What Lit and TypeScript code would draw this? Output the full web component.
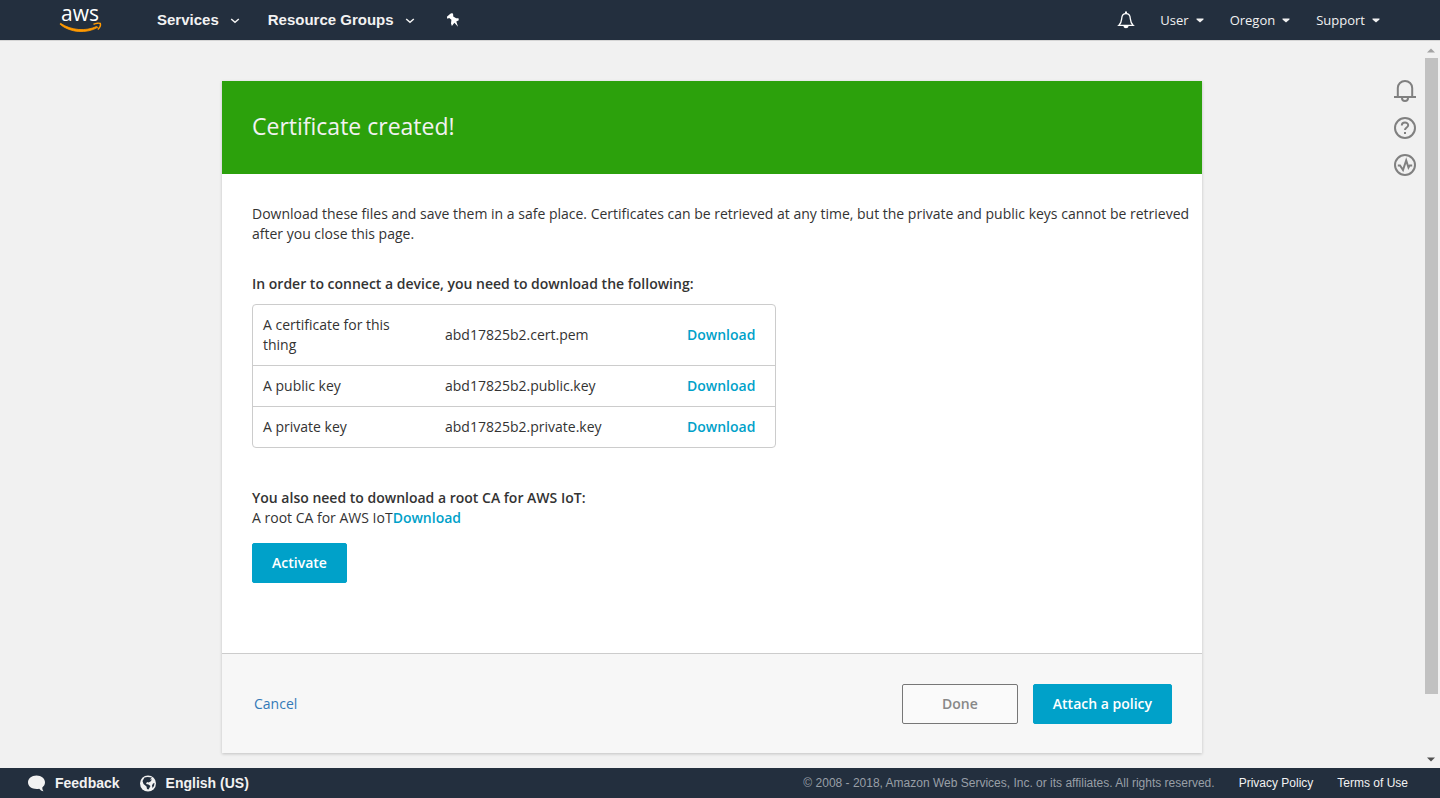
import { LitElement, html, css, svg } from "lit";
import { customElement, property } from "lit/decorators.js";

interface CertFile {
  label: string;
  name: string;
}

const FILES: CertFile[] = [
  { label: "A certificate for this thing", name: "abd17825b2.cert.pem" },
  { label: "A public key", name: "abd17825b2.public.key" },
  { label: "A private key", name: "abd17825b2.private.key" },
];

const chevron = svg`<path d="M1.200 3 5 6.300l3.800-3.300" fill="none" stroke="currentColor" stroke-width="1.500"/>`;
const caret = svg`<path d="M1.500 2.500h7v1L5 6.500 1.500 3.500z" fill="currentColor"/>`;

@customElement("console-header")
export class ConsoleHeader extends LitElement {
  static styles = css`
    :host {
      display: block;
      font-family: "Liberation Sans", Arial, sans-serif;
    }
    .bar {
      display: flex;
      align-items: center;
      justify-content: space-between;
      height: 40px;
      padding: 0 59px;
      background: #232f3e;
      border-bottom: 1px solid #d5d5d5;
    }
    .group {
      display: flex;
      align-items: center;
    }
    .logo {
      display: block;
      margin-right: 54px;
    }
    .logo svg,
    button svg {
      display: block;
      overflow: visible;
    }
    .logo text {
      font-family: "Open Sans", sans-serif;
      font-size: 21px;
      font-weight: 500;
    }
    button {
      display: flex;
      align-items: center;
      padding: 0;
      border: 0;
      background: none;
      color: #f2f2f2;
      font: bold 15px/20px "Liberation Sans", Arial, sans-serif;
      cursor: pointer;
    }
    .main {
      gap: 11px;
      margin-right: 28px;
    }
    .side {
      gap: 6px;
      margin-left: 25px;
      font: 500 13px/20px "Open Sans", sans-serif;
    }
  `;

  render() {
    return html`
      <header class="bar">
        <nav class="group" aria-label="Services">
          <a class="logo" href="#" aria-label="aws">
            <svg width="44" height="38" viewBox="0 0 44 38">
              <text x="2" y="20" fill="#fff">aws</text>
              <path d="M1.500 22.300C12 29.500 27 30.500 37.500 25.500L38.800 26.300C28 32.800 11 32 1 23.200z" fill="#f90" stroke="#f90" stroke-width="0.800" />
              <path d="M34.500 23.300C37 21.800 40.500 22 41.300 22.500 41.800 24 41 26.500 38.800 28.500" fill="none" stroke="#f90" stroke-width="1.500" />
            </svg>
          </a>
          <button class="main">Services <svg width="10" height="8" viewBox="0 0 10 8">${chevron}</svg></button>
          <button class="main">Resource Groups <svg width="10" height="8" viewBox="0 0 10 8">${chevron}</svg></button>
          <button aria-label="Pin shortcuts">
            <svg width="18" height="16" viewBox="-2 0 18 16">
              <path d="M5.300 1.800 7.300 1 8.200 2.500 8.200 4.500 11.200 6.300 13.500 6.300 13.800 8.200 11.300 9.400 13 14.800 9.400 10.800 6.900 14 6 11.500 6.400 7.800 4.200 6 2.300 6.800 1.900 4.800z" fill="#fff" />
            </svg>
          </button>
        </nav>
        <div class="group">
          <button aria-label="Notifications">
            <svg width="18" height="18" viewBox="0 0 18 18">
              <path d="M1.800 14.400C4.500 12 4.500 10 4.700 7.500 4.900 4.500 6.500 2.700 9 2.700S13.100 4.500 13.300 7.500C13.500 10 13.500 12 16.200 14.400z" fill="none" stroke="#fff" stroke-width="1.300" />
              <path d="M8 0.500h2v2H8zM6.500 15h5c0 3-5 3-5 0z" fill="#fff" />
            </svg>
          </button>
          ${["User", "Oregon", "Support"].map(
            (name) => html`<button class="side">${name} <svg width="10" height="8" viewBox="0 0 10 8">${caret}</svg></button>`
          )}
        </div>
      </header>
    `;
  }
}

@customElement("console-footer")
export class ConsoleFooter extends LitElement {
  static styles = css`
    :host {
      display: block;
      font: 12px/20px "Liberation Sans", Arial, sans-serif;
    }
    .bar {
      display: flex;
      align-items: center;
      justify-content: space-between;
      height: 30px;
      padding: 0 32px 0 28px;
      background: #232f3e;
      color: #999fa7;
    }
    .group {
      display: flex;
      align-items: center;
      gap: 20px;
    }
    .legal {
      gap: 24px;
    }
    button {
      display: flex;
      align-items: center;
      gap: 9px;
      padding: 0;
      border: 0;
      background: none;
      color: #f2f2f2;
      font: bold 14px/20px "Liberation Sans", Arial, sans-serif;
      cursor: pointer;
    }
    a {
      color: #f2f2f2;
      text-decoration: none;
    }
  `;

  render() {
    return html`
      <footer class="bar">
        <div class="group">
          <button>
            <svg width="18" height="17" viewBox="0 0 18 17">
              <path d="M8.500 0.500c5 0 8.500 3 8.500 6.800 0 2.200-1 3.900-2.700 5.100 0 1.800 0.500 2.800 1.200 3.900-1.800-0.200-3.300-1.300-4.300-2.500C5 14.800 0 12 0 7.300 0 3.500 3.500 0.500 8.500 0.500z" fill="#f2f2f2" />
            </svg>
            Feedback
          </button>
          <button>
            <svg width="17" height="17" viewBox="0 0 17 17">
              <circle cx="8" cy="8.500" r="8" fill="#f2f2f2" />
              <path d="M4.500 2.500 7.500 2 12 2.500 10 4.500 12 4.500 10.500 6.500 8.500 7.500 7 7 6 9 8.500 9.500 10.500 11 8.500 14.500 7 14 6.500 11.500 3.500 9 2.500 6zM13 8.500 14.500 8 14 11 12.500 13 12 10.500z" fill="#232f3e" />
            </svg>
            English (US)
          </button>
        </div>
        <div class="group legal">
          <span>© 2008 - 2018, Amazon Web Services, Inc. or its affiliates. All rights reserved.</span>
          <a href="#">Privacy Policy</a>
          <a href="#">Terms of Use</a>
        </div>
      </footer>
    `;
  }
}

@customElement("certificate-card")
export class CertificateCard extends LitElement {
  @property({ attribute: false }) files: CertFile[] = FILES;

  static styles = css`
    :host {
      display: block;
      font: 14px/20px "Open Sans", sans-serif;
      color: #333;
    }
    .card {
      background: #fff;
      box-shadow: 0 1px 3px rgba(0, 0, 0, 0.2);
    }
    .title {
      margin: 0;
      padding: 30px 30px 33px;
      background: #2ca10c;
      color: #f2f2f2;
      font-size: 23px;
      line-height: 30px;
      font-weight: 500;
    }
    .body {
      padding: 30px 10px 70px 30px;
    }
    p,
    h2 {
      margin: 0;
      font-size: 14px;
      line-height: 20px;
    }
    h2 {
      font-weight: 600;
    }
    .intro {
      margin-bottom: 30px;
    }
    .files {
      width: 524px;
      margin: 10px 0 40px;
      border: 1px solid #ccc;
      border-radius: 4px;
      border-spacing: 0;
      table-layout: fixed;
    }
    th,
    td {
      padding: 10px;
      text-align: left;
      font-weight: 400;
    }
    th {
      width: 132px;
      padding-right: 40px;
    }
    .action {
      width: 78px;
    }
    tr + tr > * {
      border-top: 1px solid #ccc;
    }
    a {
      color: #00a1c9;
      font-weight: 600;
      text-decoration: none;
    }
    button {
      height: 40px;
      padding: 0 19px;
      border: 1px solid #00a1c9;
      border-radius: 2px;
      background: #00a1c9;
      color: #fff;
      font: 600 14px/20px "Open Sans", sans-serif;
      cursor: pointer;
    }
    .activate {
      display: block;
      margin-top: 15px;
    }
    .foot {
      display: flex;
      align-items: center;
      gap: 15px;
      padding: 30px 30px 29px;
      border-top: 1px solid #ccc;
      background: #f7f7f7;
    }
    .cancel {
      margin-right: auto;
      padding-left: 2px;
      color: #337ab7;
      font-weight: 400;
    }
    .done {
      padding: 0 39px;
      border-color: #777;
      background: #fafafa;
      color: #888;
    }
  `;

  render() {
    return html`
      <section class="card">
        <h1 class="title">Certificate created!</h1>
        <div class="body">
          <p class="intro">
            Download these files and save them in a safe place. Certificates can be retrieved at any time, but the
            private and public keys cannot be retrieved after you close this page.
          </p>
          <h2>In order to connect a device, you need to download the following:</h2>
          <table class="files">
            ${this.files.map(
              (f) => html`<tr>
                <th scope="row">${f.label}</th>
                <td>${f.name}</td>
                <td class="action"><a href="#">Download</a></td>
              </tr>`
            )}
          </table>
          <h2>You also need to download a root CA for AWS IoT:</h2>
          <p>A root CA for AWS IoT<a href="#">Download</a></p>
          <button class="activate">Activate</button>
        </div>
        <div class="foot">
          <a class="cancel" href="#">Cancel</a>
          <button class="done">Done</button>
          <button>Attach a policy</button>
        </div>
      </section>
    `;
  }
}

@customElement("app-root")
export class AppRoot extends LitElement {
  static styles = css`
    :host {
      display: grid;
      grid-template-rows: auto 1fr auto;
      height: 100vh;
    }
    .main {
      display: grid;
      grid-template-columns: 1fr minmax(0, 980px) 1fr 16px;
      min-height: 0;
      overflow: hidden;
      background: #f1f1f1;
    }
    .card {
      grid-column: 2;
      margin-top: 40px;
    }
    .tools {
      display: flex;
      flex-direction: column;
      align-items: flex-end;
      gap: 13px;
      padding: 38px 7px 0 0;
    }
    .tools button {
      padding: 0;
      border: 0;
      background: none;
      cursor: pointer;
    }
    .tools svg {
      display: block;
      fill: none;
      stroke: #808080;
      stroke-width: 2;
    }
    .scroll {
      display: flex;
      flex-direction: column;
      align-items: center;
      gap: 5px;
      padding: 7px 2px 6px 0;
    }
    .thumb {
      flex: 0 1 636px;
      width: 13px;
      background: #c1c1c1;
    }
    .scroll svg {
      flex: none;
    }
    .down {
      margin-top: auto;
    }
  `;

  render() {
    return html`
      <console-header></console-header>
      <main class="main">
        <certificate-card class="card"></certificate-card>
        <div class="tools">
          <button aria-label="Notifications">
            <svg width="24" height="24" viewBox="0 0 24 24">
              <path d="M1 18h22M4.800 18V9a7.200 7 0 0 1 14.400 0V18M9 19a3 3 0 0 0 6 0" />
            </svg>
          </button>
          <button aria-label="Help">
            <svg width="24" height="24" viewBox="0 0 24 24">
              <circle cx="12" cy="12" r="10" />
              <path d="M8.800 9.500c0-4 6.400-3.800 6.400-0.300 0 2.300-3.200 2.300-3.200 4.800M12 16v2" />
            </svg>
          </button>
          <button aria-label="Activity">
            <svg width="24" height="24" viewBox="0 0 24 24">
              <circle cx="12" cy="12" r="10" />
              <path d="M4.800 12.500h2.200l3 4.500L13.200 7.500l2.300 7 1.200-2h2.500" />
            </svg>
          </button>
        </div>
        <div class="scroll" aria-hidden="true">
          <svg width="8" height="5" viewBox="0 0 8 5"><path d="M0 4.500h8L4 0.500z" fill="#a3a3a3" /></svg>
          <div class="thumb"></div>
          <svg class="down" width="8" height="5" viewBox="0 0 8 5"><path d="M0 0.500h8L4 4.500z" fill="#505050" /></svg>
        </div>
      </main>
      <console-footer></console-footer>
    `;
  }
}
